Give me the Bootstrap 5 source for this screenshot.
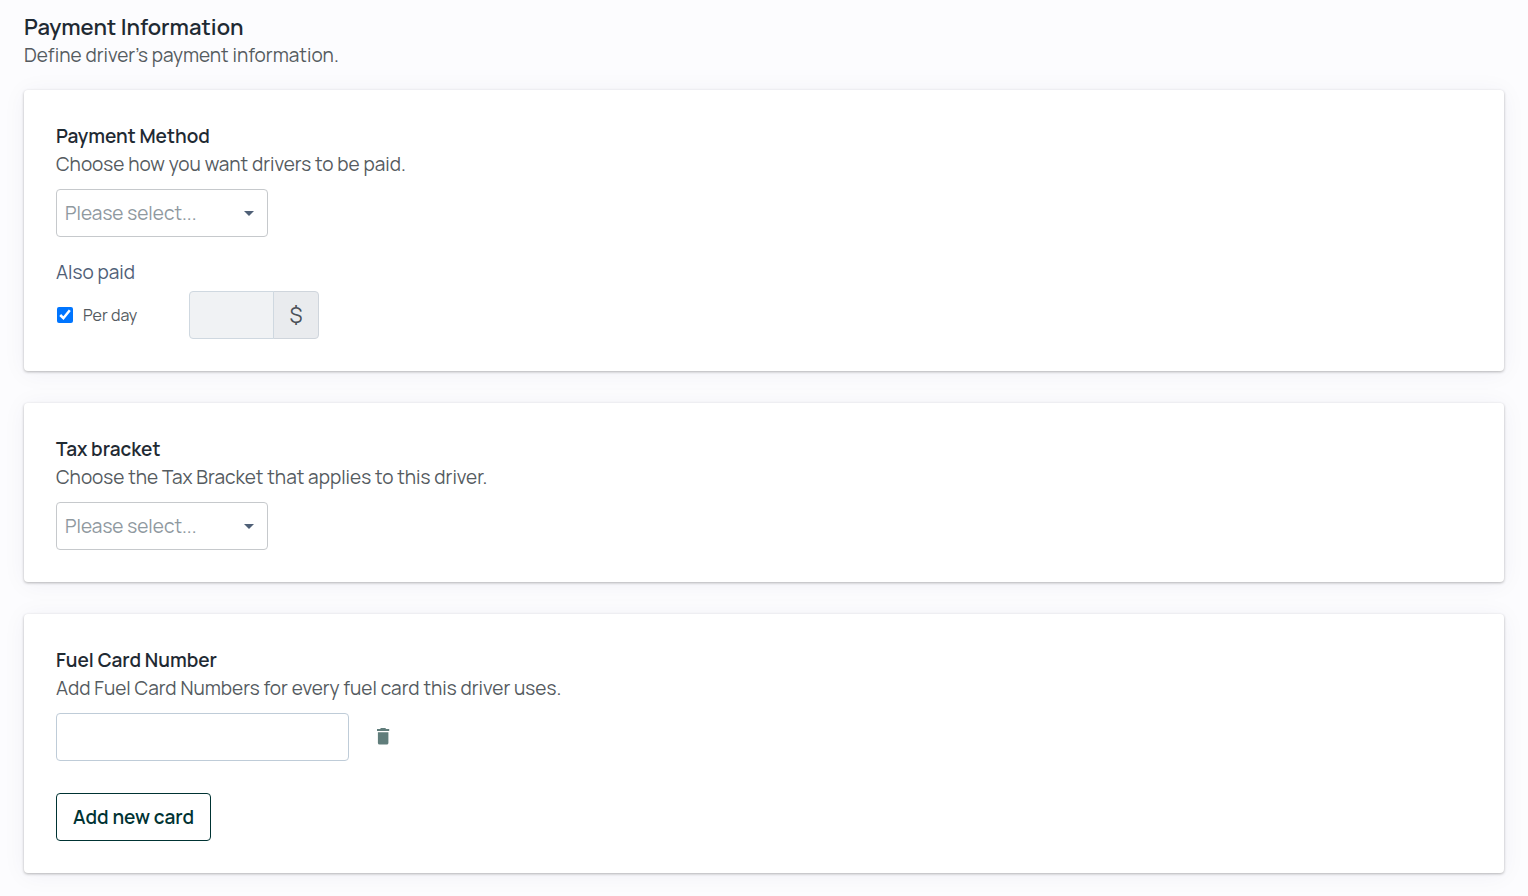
<!DOCTYPE html>
<html lang="en">
<head>
<meta charset="utf-8">
<meta name="viewport" content="width=device-width, initial-scale=1">
<title>Payment Information</title>
<link href="https://cdn.jsdelivr.net/npm/bootstrap@5.3.0/dist/css/bootstrap.min.css" rel="stylesheet">
<style>
  body {
    font-family: Manrope, Inter, "Liberation Sans", sans-serif;
    font-size: 19px;
    line-height: 28px;
    color: #555b5f;
    background: #fcfcfe;
  }
  .page { padding: 13px 24px 22px; }
  .title { font-size: 22px; font-weight: 600; line-height: 28px; color: #1f2a33; }
  .subtitle { font-size: 19px; font-weight: 600; line-height: 28px; color: #1f2a33; }
  .intro { margin-bottom: 21px; }
  .hint { margin-bottom: 11px; }
  .stack { gap: 32px; }
  .panel {
    padding: 32px;
    background: #fff;
    border: 0;
    border-radius: 4px;
    box-shadow: 0 1px 3px rgba(0, 0, 0, .28), 0 2px 24px rgba(40, 40, 90, .05);
  }
  .form-control, .form-select, .input-group-text {
    height: 48px;
    border-radius: 4px;
    font-size: 19px;
  }
  .form-select {
    width: 212px;
    padding: 0 40px 0 8px;
    color: #8f999f;
    border-color: #c6c9cc;
    background-image: url("data:image/svg+xml,%3Csvg xmlns='http://www.w3.org/2000/svg' width='10' height='5'%3E%3Cpath d='M0 0h10L5 5z' fill='%234f6077'/%3E%3C/svg%3E");
    background-size: 10px 5px;
    background-position: right 13px center;
  }
  .extras { margin-top: 21px; }
  .also { margin: 0 0 5px; padding: 0; float: none; font-size: 19px; line-height: 28px; color: #4f6077; }
  .check-col { width: 133px; font-size: 16px; gap: 10px; }
  .check-col .form-check-input {
    width: 16px; height: 16px; margin: 0 0 0 1px;
    appearance: auto;
    accent-color: #0075ff;
    background-image: none;
  }
  .rate { width: 130px; }
  .rate .form-control:disabled { background: #f0f2f4; border-color: #cfd8e0; }
  .rate .input-group-text { width: 46px; justify-content: center; padding: 0; font-size: 22px; color: #495057; background: #e9ebee; border-color: #cfd5dc; }
  .card-no { width: 293px; }
  .card-no.form-control { border-color: #bfccd8; }
  .trash { margin-left: 20px; padding: 4px; line-height: 1; border: 0; color: #607d7b; }
  .btn-add { height: 48px; margin-top: 32px; padding: 0 16px; border: 1px solid #003333; border-radius: 4px; font-size: 19px; font-weight: 600; color: #003333; }
  .btn-add:hover { color: #fff; background: #003333; }
</style>
</head>
<body>
<main class="page container-fluid">
  <h1 class="title mb-0">Payment Information</h1>
  <p class="intro">Define driver’s payment information.</p>

  <form class="stack d-flex flex-column">
    <section class="panel card">
      <h2 class="subtitle mb-0"><label for="method">Payment Method</label></h2>
      <p class="hint">Choose how you want drivers to be paid.</p>
      <select class="form-select" id="method"><option selected>Please select...</option></select>
      <fieldset class="extras">
        <legend class="also">Also paid</legend>
        <div class="d-flex align-items-center">
          <div class="check-col d-flex align-items-center">
            <input class="form-check-input" type="checkbox" id="perday" checked>
            <label for="perday">Per day</label>
          </div>
          <div class="rate input-group flex-nowrap">
            <input class="form-control" type="text" aria-label="Amount per day" disabled>
            <span class="input-group-text">$</span>
          </div>
        </div>
      </fieldset>
    </section>

    <section class="panel card">
      <h2 class="subtitle mb-0"><label for="tax">Tax bracket</label></h2>
      <p class="hint">Choose the Tax Bracket that applies to this driver.</p>
      <select class="form-select" id="tax"><option selected>Please select...</option></select>
    </section>

    <section class="panel card">
      <h2 class="subtitle mb-0"><label for="fuel">Fuel Card Number</label></h2>
      <p class="hint">Add Fuel Card Numbers for every fuel card this driver uses.</p>
      <div class="d-flex align-items-center">
        <input class="form-control card-no" type="text" id="fuel">
        <button class="btn trash" type="button" aria-label="Delete card">
          <svg class="d-block" width="20" height="20" viewBox="0 0 20 20" fill="currentColor" aria-hidden="true"><path d="M4.900 5.200h10.500v10.700a1.700 1.700 0 0 1-1.700 1.700H6.600a1.700 1.700 0 0 1-1.700-1.700zM4 2h3l1-.9h4.200l1 .9h3v2H4z"/></svg>
        </button>
      </div>
      <button class="btn btn-add align-self-start" type="button">Add new card</button>
    </section>
  </form>
</main>
<script src="https://cdn.jsdelivr.net/npm/bootstrap@5.3.0/dist/js/bootstrap.bundle.min.js"></script>
</body>
</html>
